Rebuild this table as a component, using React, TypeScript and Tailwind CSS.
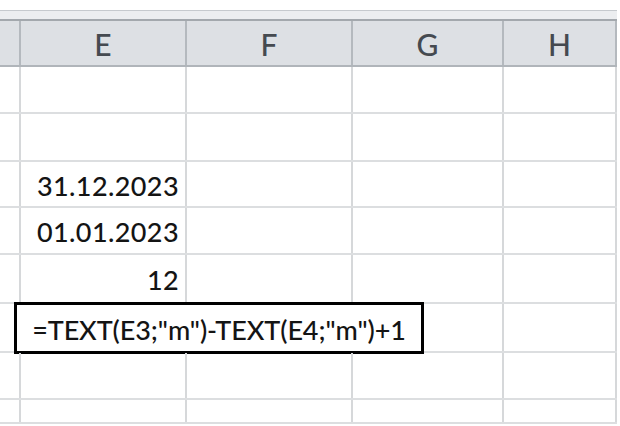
const COLS = ["", "E", "F", "G", "H"];

const grid = "grid grid-cols-[21px_166px_166px_151px_113px]";
const font = { fontFamily: "Lato, 'Open Sans', sans-serif" };

type Row = { h: string; e?: string };

const rows: Row[] = [
  { h: "h-[47px]" },
  { h: "h-[48px]" },
  { h: "h-[46px]", e: "31.12.2023" },
  { h: "h-[47px]", e: "01.01.2023" },
  { h: "h-[49px]", e: "12" },
  { h: "h-[49px]" },
  { h: "h-[47px]" },
  { h: "h-[24px]" },
];

export default function App() {
  return (
    <div
      className="relative h-[426px] w-[620px] overflow-hidden bg-white"
      style={font}
    >
      {/* Ribbon edge above the column headers */}
      <div className="h-[10px] bg-white" />
      <div className="h-[9px] border-t border-[#c6cace] bg-[#eceef0]" />
      <div className="h-[2px] bg-[#a3a8ad]" />

      {/* Column headers */}
      <div className={`${grid} h-[46px] border-b-2 border-[#b0b5ba] bg-[#dde0e4]`}>
        {COLS.map((c, i) => (
          <div
            key={i}
            className="flex items-center justify-center border-r-2 border-[#b4b9be] pt-[2px] text-[30px] font-medium leading-none text-[#454a50]"
          >
            {c}
          </div>
        ))}
      </div>

      {rows.map((r, ri) => (
        <div
          key={ri}
          className={`${grid} ${r.h} relative border-b-2 border-[#dcdee0]`}
        >
          <div className="border-r-2 border-[#d6d8da]" />
          <div className="flex items-center justify-end border-r-2 border-[#d6d8da] pr-[6px] pt-[2px] text-[27px] font-medium leading-none tracking-[0.4px] text-[#141414]">
            {r.e}
          </div>
          <div className="border-r-2 border-[#d6d8da]" />
          <div className="border-r-2 border-[#d6d8da]" />
          <div className="border-r-2 border-[#d6d8da]" />

          {ri === 5 && (
            <div className="absolute left-[14px] top-[-2px] flex h-[52px] w-[410px] items-center justify-center border-[3px] border-black bg-white pt-[2px] text-[27px] font-medium leading-none tracking-[-0.1px] text-[#141414]">
              =TEXT(E3;"m")-TEXT(E4;"m")+1
            </div>
          )}
        </div>
      ))}

      {/* thin white strip on the right edge */}
      <div className="absolute right-0 top-0 h-full w-[3px] bg-white" />
    </div>
  );
}
